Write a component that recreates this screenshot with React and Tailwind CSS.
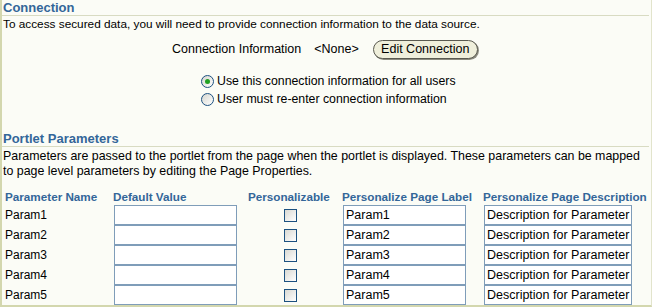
import React from 'react';

const font = { fontFamily: '"Liberation Sans", Arial, sans-serif' };

function SectionTitle({ children }) {
  return (
    <div className="border-b border-[#d8dbc2] mr-[2px]">
      <h2 className="h-[15px] text-[13px] leading-[15px] font-bold text-[#336699] pl-[1px]">{children}</h2>
    </div>
  );
}

function Radio({ checked }) {
  return (
    <span className="inline-flex items-center justify-center w-[13px] h-[13px] rounded-full border border-[#1c5180] bg-gradient-to-br from-[#d6d6cf] to-white">
      {checked && <span className="w-[5px] h-[5px] rounded-full bg-[#21a121]" />}
    </span>
  );
}

function Checkbox() {
  return <span className="block w-[13px] h-[13px] border border-[#1c5180] bg-gradient-to-br from-[#d9d9d3] to-white" />;
}

function TextBox({ value, className }) {
  return (
    <div className={`h-[20px] border border-[#7f9db9] bg-white pl-[2px] text-[12.5px] leading-[18px] text-black whitespace-nowrap overflow-hidden ${className}`}>
      {value}
    </div>
  );
}

export default function App() {
  const params = ['Param1', 'Param2', 'Param3', 'Param4', 'Param5'];
  return (
    <div style={font} className="w-[652px] h-[307px] bg-[#fbfcf6] border-l-2 border-b-2 border-r border-l-[#d3d7ae] border-b-[#d3d7ae] border-r-[#e2e4cc] text-[11.8px] text-black overflow-hidden">
      <SectionTitle>Connection</SectionTitle>
      <p className="pl-[1px] pt-[1px] leading-[15px] whitespace-nowrap">
        To access secured data, you will need to provide connection information to the data source.
      </p>

      <div className="flex items-center mt-[8px] h-[19px] pl-[170px] text-[12.5px]">
        <span>Connection Information</span>
        <span className="ml-[13px]">&lt;None&gt;</span>
        <button className="ml-[14px] h-[19px] w-[105px] rounded-full border border-[#5a5a50] shadow-[1px_1px_0_#8c8c80] bg-[#efefdb] text-[12.5px] leading-[17px] text-black">
          Edit Connection
        </button>
      </div>

      <div className="pl-[199px] mt-[15px] flex flex-col gap-[4px] text-[12.3px]">
        <label className="flex items-center gap-[3px] h-[14px]">
          <Radio checked />
          <span>Use this connection information for all users</span>
        </label>
        <label className="flex items-center gap-[3px] h-[14px]">
          <Radio />
          <span>User must re-enter connection information</span>
        </label>
      </div>

      <div className="mt-[25px]">
        <SectionTitle>Portlet Parameters</SectionTitle>
      </div>
      <p className="pl-[1px] pt-[2px] leading-[15px] whitespace-nowrap text-[12.4px]">
        Parameters are passed to the portlet from the page when the portlet is displayed. These parameters can be mapped
        <br />
        to page level parameters by editing the Page Properties.
      </p>

      <div className="pl-[3px] mt-[8px]">
        <div className="grid grid-cols-[108px_135px_94px_141px_1fr] items-center font-bold text-[11.7px] text-[#336699] h-[18px] leading-[15px] whitespace-nowrap">
          <span>Parameter Name</span>
          <span>Default Value</span>
          <span>Personalizable</span>
          <span>Personalize Page Label</span>
          <span>Personalize Page Description</span>
        </div>
        {params.map(p => (
          <div key={p} className="grid grid-cols-[108px_135px_94px_141px_1fr] items-center h-[20px]">
            <span className="text-[12px]">{p}</span>
            <TextBox value="" className="ml-[1px] w-[123px]" />
            <div className="pl-[36px]"><Checkbox /></div>
            <TextBox value={p} className="ml-[1px] w-[123px]" />
            <TextBox value="Description for Parameter" className="ml-[1px] w-[148px]" />
          </div>
        ))}
      </div>
    </div>
  );
}
